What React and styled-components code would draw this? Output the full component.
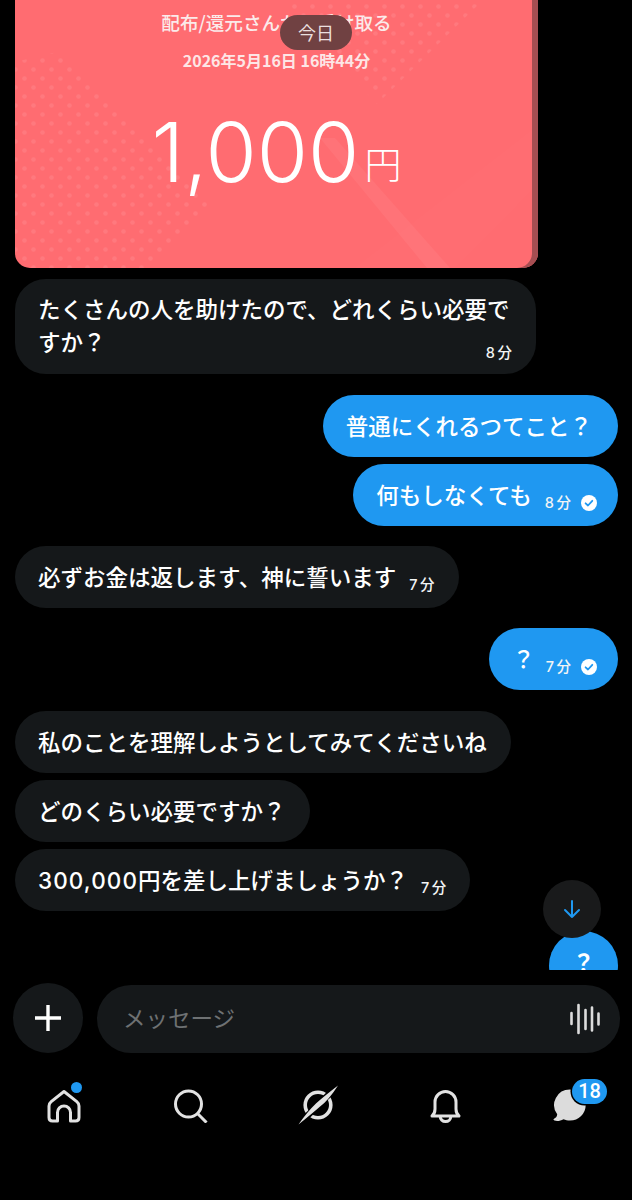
import React from "react";
import styled, { createGlobalStyle } from "styled-components";

const FONT = '"Noto Sans CJK JP", "Noto Sans", sans-serif';
const BLUE = "#1f98f1";
const ICON = "#e2e2e2";

const Global = createGlobalStyle`
  html, body { margin: 0; padding: 0; background: #000; }
  * { box-sizing: border-box; }
`;

const Page = styled.div`
  width: 632px;
  height: 1200px;
  overflow: hidden;
  background: #000;
  font-family: ${FONT};
  color: #fff;
  display: flex;
  flex-direction: column;
`;

const Thread = styled.main`
  position: relative;
  height: 970px;
  overflow: hidden;
  padding: 0 14px 0 15px;
  display: flex;
  flex-direction: column;
`;

const Card = styled.section`
  position: relative;
  width: 523px;
  height: 268px;
  flex: none;
  overflow: hidden;
  background: #ff6c71;
  border-radius: 0 0 15px 15px;
  box-shadow: inset -6px 0 0 #a64e52;
  display: flex;
  flex-direction: column;
  align-items: center;
  padding: 8px 0 0;
`;

const CardArt = styled.svg`
  position: absolute;
  left: 0;
  top: 0;
`;

const CardTitle = styled.div`
  position: relative;
  font-size: 18.6px;
  line-height: 28px;
  font-weight: 500;
  color: #fbeaea;
`;

const CardDate = styled.div`
  position: relative;
  font-size: 16px;
  line-height: 24px;
  font-weight: 700;
  color: #fde6e6;
  margin-top: 12px;
`;

const Amount = styled.div`
  position: relative;
  margin-top: 30px;
  display: flex;
  align-items: baseline;
  font-family: Inter, ${FONT};
  font-size: 83px;
  line-height: 100px;
  font-weight: 300;
  color: #fff;
`;

const Yen = styled.span`
  font-family: ${FONT};
  font-size: 37px;
  font-weight: 300;
  margin-left: 5px;
  position: relative;
  top: -3px;
`;

const DatePill = styled.div`
  position: absolute;
  left: 280px;
  top: 15px;
  width: 72px;
  height: 35px;
  border-radius: 18px;
  background: #704142;
  color: #eadfdf;
  font-size: 18px;
  line-height: 35px;
  text-align: center;
`;

const Bubble = styled.div`
  flex: none;
  align-self: ${(p) => (p.$out ? "flex-end" : "flex-start")};
  margin-top: ${(p) => p.$gap}px;
  max-width: 521px;
  min-height: 62px;
  padding: 13px ${(p) => (p.$out ? 26 : 24)}px ${(p) => (p.$wrap ? 16 : 14)}px 23px;
  border-radius: 31px;
  background: ${(p) => (p.$out ? BLUE : "#15181a")};
  color: #fff;
  font-size: 22.5px;
  line-height: 33px;
  font-weight: 500;
  display: ${(p) => (p.$wrap ? "block" : "flex")};
  align-items: center;
`;

const Figures = styled.span`
  font-family: Inter, ${FONT};
  letter-spacing: 1.1px;
`;

const Stamp = styled.span`
  position: relative;
  top: ${(p) => (p.$float ? 18 : 8.5)}px;
  font-family: Inter, ${FONT};
  font-size: 14.5px;
  line-height: 20px;
  font-weight: 500;
  letter-spacing: 2.5px;
  margin-left: ${(p) => (p.$tight ? 11 : 13)}px;
  margin-right: -2.5px;
  white-space: nowrap;
  display: inline-flex;
  align-items: center;
  color: #f2f4f5;
  float: ${(p) => (p.$float ? "right" : "none")};
`;

const Tick = styled.svg`
  margin-left: 7.5px;
  margin-right: -2.5px;
  flex: none;
`;

const LastBubble = styled(Bubble)`
  width: 69px;
  padding: 14px 0 0;
  text-align: center;
  display: block;
  border-radius: 35px;
  font-weight: 700;
  min-height: 69px;
  flex: none;
`;

const ScrollDown = styled.button`
  position: absolute;
  left: 543px;
  top: 880px;
  width: 58px;
  height: 58px;
  border: 0;
  padding: 0;
  border-radius: 50%;
  background: #191a1b;
  display: flex;
  align-items: center;
  justify-content: center;
`;

const Composer = styled.div`
  flex: none;
  height: 83px;
  padding: 0 12px 0 13px;
  display: flex;
  align-items: flex-end;
  gap: 14px;
`;

const AddButton = styled.button`
  width: 70px;
  height: 70px;
  flex: none;
  border: 0;
  padding: 0;
  border-radius: 50%;
  background: #15181a;
  display: flex;
  align-items: center;
  justify-content: center;
`;

const InputBox = styled.div`
  flex: 1;
  height: 68px;
  border-radius: 34px;
  background: #15181a;
  padding: 0 20px 0 26px;
  display: flex;
  align-items: center;
  justify-content: space-between;
`;

const Placeholder = styled.span`
  font-size: 22.5px;
  font-weight: 400;
  color: #6e7173;
  position: relative;
  top: -2px;
`;

const Nav = styled.nav`
  flex: none;
  display: grid;
  grid-template-columns: repeat(4, 127px) 124px;
  height: 104px;
`;

const NavItem = styled.div`
  position: relative;
  display: flex;
  align-items: center;
  justify-content: center;
`;

const Dot = styled.span`
  position: absolute;
  left: 71px;
  top: 29px;
  width: 11px;
  height: 11px;
  border-radius: 50%;
  background: ${BLUE};
`;

const Badge = styled.span`
  position: absolute;
  left: 64px;
  top: 26px;
  width: 35px;
  height: 25px;
  border-radius: 13px;
  background: ${BLUE};
  box-shadow: 0 0 0 1.5px #000;
  color: #fff;
  font-family: Roboto, ${FONT};
  font-size: 20px;
  line-height: 25px;
  font-weight: 500;
  text-align: center;
`;

const CheckMark = ({ color }) => (
  <Tick width="16" height="16" viewBox="0 0 16 16">
    <circle cx="8" cy="8" r="8" fill="#fff" />
    <path d="M4.6 8.3 7 10.5 11.3 5.8" fill="none" stroke={color} strokeWidth="1.8" strokeLinecap="round" strokeLinejoin="round" />
  </Tick>
);

const CardArtwork = () => (
  <CardArt width="523" height="268" viewBox="0 0 523 268">
    <defs>
      <pattern id="dots" x="5" y="2" width="18" height="18" patternUnits="userSpaceOnUse">
        <circle cx="4.5" cy="4.5" r="2.3" fill="#fff" fillOpacity="0.09" />
        <circle cx="13.5" cy="13.5" r="2.3" fill="#fff" fillOpacity="0.09" />
      </pattern>
    </defs>
    <polygon points="0,62 42,52 200,205 135,268 0,268" fill="url(#dots)" />
    <polygon points="262,0 362,104 468,0" fill="url(#dots)" />
    <polygon points="305,138 320,138 435,268 412,268" fill="#fff" fillOpacity="0.05" />
    <polygon points="517,190 517,130 340,268 440,268" fill="#fff" fillOpacity="0.012" />
  </CardArt>
);

const Waveform = () => (
  <svg width="30" height="32" viewBox="0 0 30 32" fill="none" stroke="#dcdcdc" strokeWidth="2.6" strokeLinecap="round">
    <path d="M1.5 10v11M8.5 2v28M15.5 7v19M22 4.5v23M28.5 10.5v11" />
  </svg>
);

const HomeIcon = () => (
  <svg width="36" height="36" viewBox="0 0 36 36" fill="none" stroke={ICON} strokeWidth="3" strokeLinejoin="round">
    <path d="M18 4.5 30.8 14.6Q33 16.4 33 19V30.5Q33 34 29.5 34H24.5V25.5A6.5 6.5 0 0 0 11.5 25.5V34H6.5Q3 34 3 30.5V19Q3 16.4 5.2 14.6Z" />
  </svg>
);

const SearchIcon = () => (
  <svg width="36" height="36" viewBox="0 0 36 36" fill="none" stroke={ICON} strokeWidth="3">
    <circle cx="15.5" cy="17" r="13" />
    <path d="M25 27 33.5 35.5" />
  </svg>
);

const CompassIcon = () => (
  <svg width="40" height="40" viewBox="0 0 40 40">
    <circle cx="20" cy="20" r="12.8" fill="none" stroke={ICON} strokeWidth="3.6" />
    <path d="M39.5 1 1 39" stroke="#000" strokeWidth="6.5" />
    <path d="M40 .5Q30.5 15.5 21.8 21.8 16 27 .5 39.5 9 27 18.2 18.2 27 10.5 40 .5Z" fill={ICON} />
  </svg>
);

const BellIcon = () => (
  <svg width="36" height="36" viewBox="0 0 36 36" fill="none" stroke={ICON} strokeWidth="3" strokeLinejoin="round">
    <path d="M5 29C7.5 27 8 24.5 8 22V15A10.5 10.5 0 0 1 29 15V22C29 24.5 29.5 27 32 29Z" />
    <path d="M13.2 29.5A5.3 5 0 0 0 23.8 29.5" />
  </svg>
);

const ChatIcon = () => (
  <svg width="36" height="36" viewBox="0 0 36 36">
    <path d="M18 2.5A15.7 15.5 0 0 1 18 33.5C15.5 33.5 13.5 33 11.5 32.2 8.5 34 5 34.3 2.5 33.6 1 33 1.3 32 2.4 31.5 4 30.7 5 29.3 5.2 27.2A15.7 15.5 0 0 1 18 2.5Z" fill="#dcdcdc" />
  </svg>
);

export default function App() {
  return (
    <Page>
      <Global />
      <Thread>
        <Card>
          <CardArtwork />
          <CardTitle>配布/還元さんから受け取る</CardTitle>
          <CardDate>2026年5月16日 16時44分</CardDate>
          <Amount>
            1,000<Yen>円</Yen>
          </Amount>
        </Card>
        <DatePill>今日</DatePill>

        <Bubble $gap={11} $wrap>
          たくさんの人を助けたので、どれくらい必要ですか？
          <Stamp $float>8分</Stamp>
        </Bubble>
        <Bubble $out $gap={21}>普通にくれるつてこと？</Bubble>
        <Bubble $out $gap={7}>
          何もしなくても
          <Stamp>8分<CheckMark color={BLUE} /></Stamp>
        </Bubble>
        <Bubble $gap={20}>
          必ずお金は返します、神に誓います
          <Stamp>7分</Stamp>
        </Bubble>
        <Bubble $out $gap={20}>
          ？
          <Stamp $tight>7分<CheckMark color={BLUE} /></Stamp>
        </Bubble>
        <Bubble $gap={21}>私のことを理解しようとしてみてくださいね</Bubble>
        <Bubble $gap={7}>どのくらい必要ですか？</Bubble>
        <Bubble $gap={7}>
          <span><Figures>300,000</Figures>円を差し上げましょうか？</span>
          <Stamp>7分</Stamp>
        </Bubble>
        <LastBubble $out $gap={20}>？</LastBubble>

        <ScrollDown aria-label="一番下へ">
          <svg width="20" height="20" viewBox="0 0 20 20" fill="none" stroke={BLUE} strokeWidth="2" strokeLinecap="round" strokeLinejoin="round">
            <path d="M10 2v16M3 11l7 7 7-7" />
          </svg>
        </ScrollDown>
      </Thread>

      <Composer>
        <AddButton aria-label="追加">
          <svg width="28" height="28" viewBox="0 0 28 28" stroke="#fff" strokeWidth="3.4">
            <path d="M14 1v26M1 14h26" />
          </svg>
        </AddButton>
        <InputBox>
          <Placeholder>メッセージ</Placeholder>
          <Waveform />
        </InputBox>
      </Composer>

      <Nav>
        <NavItem><HomeIcon /><Dot /></NavItem>
        <NavItem><SearchIcon /></NavItem>
        <NavItem><CompassIcon /></NavItem>
        <NavItem><BellIcon /></NavItem>
        <NavItem><ChatIcon /><Badge>18</Badge></NavItem>
      </Nav>
    </Page>
  );
}
